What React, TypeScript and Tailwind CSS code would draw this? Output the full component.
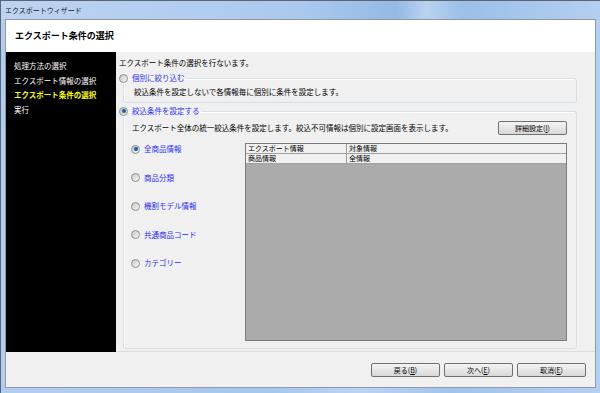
import React from "react";

const FONT = { fontFamily: '"Noto Sans CJK JP", "Noto Sans", sans-serif' };

function Radio({ checked }: { checked?: boolean }) {
  return (
    <span className="w-[9px] h-[9px] shrink-0 rounded-full border border-[#8e8f8f] bg-[linear-gradient(135deg,#c8c8c8,#f8f8f8)] flex items-center justify-center">
      {checked && <span className="w-[4px] h-[4px] rounded-full bg-[#1d5fa8] shadow-[0_0_1px_#7fb3e6]" />}
    </span>
  );
}

function Btn({ label, k }: { label: string; k: string }) {
  return (
    <button className="w-[69px] h-[14px] rounded-[2px] border border-[#707070] bg-[linear-gradient(#f4f4f4,#e6e6e6_50%,#d8d8d8)] text-[7px] leading-[12px] text-black flex items-center justify-center">
      {label}(<span className="underline">{k}</span>)
    </button>
  );
}

const options = ["全商品情報", "商品分類", "機割モデル情報", "共通商品コード", "カテゴリー"];

export default function App() {
  return (
    <div
      style={FONT}
      className="w-[600px] h-[393px] flex flex-col overflow-hidden border-t border-l border-[#5a6676] bg-[linear-gradient(90deg,#b3cdee,#a6c6ec_45%,#bcd4f1_60%,#a2c2ea_75%,#b6d0ef)]"
    >
      <div className="h-[18px] shrink-0 flex items-center pl-[4px] text-[7px] text-[#10192a] bg-[linear-gradient(90deg,#bcd4f0,#abc9ee_50%,#95b9e4_66%,#b9d2f0_71%,#9cbfe8_77%,#b4cfef_100%)]">
        エクスポートウィザード
      </div>
      <div className="flex-1 flex flex-col ml-[4px] mr-[4px] mb-[5px] border border-[#8d9aab] bg-[#f0f0f0]">
        <div className="h-[32px] shrink-0 bg-white flex items-center pl-[9px] text-[9px] font-bold text-black">
          エクスポート条件の選択
        </div>
        <div className="flex flex-1 min-h-0">
          <div className="w-[110px] shrink-0 bg-black flex flex-col pt-[7px] pl-[8px] text-[7.5px] leading-[14.5px] text-white">
            <div>処理方法の選択</div>
            <div>エクスポート情報の選択</div>
            <div className="text-[#ffff00] font-bold">エクスポート条件の選択</div>
            <div>実行</div>
          </div>
          <div className="flex-1 flex flex-col border-b border-[#dcdcdc] text-[7.5px] leading-[12px] text-black">
            <div className="pl-[3px] pt-[5px]">エクスポート条件の選択を行ないます。</div>
            <fieldset className="ml-[7px] mr-[18px] mt-[3px] border border-[#d5dfe5] rounded-[3px] shadow-[inset_1px_1px_0_#ffffff]">
              <legend className="ml-[-5px] pr-[2px] flex items-center gap-[4px] text-[#2b2bff]">
                <Radio />
                <span>個別に絞り込む</span>
              </legend>
              <div className="pl-[10px] pt-[2px] pb-[4px]">絞込条件を設定しないで各情報毎に個別に条件を設定します。</div>
            </fieldset>
            <fieldset className="flex-1 ml-[7px] mr-[18px] mt-[2px] mb-[2px] border border-[#d5dfe5] rounded-[3px] flex flex-col shadow-[inset_1px_1px_0_#ffffff]">
              <legend className="ml-[-5px] pr-[2px] flex items-center gap-[4px] text-[#2b2bff]">
                <Radio checked />
                <span>絞込条件を設定する</span>
              </legend>
              <div className="flex items-center justify-between pl-[8px] pr-[9px] mt-[4px]">
                <span>エクスポート全体の統一絞込条件を設定します。絞込不可情報は個別に設定画面を表示します。</span>
                <button className="w-[69px] h-[14px] rounded-[2px] border border-[#707070] bg-[linear-gradient(#f4f4f4,#e6e6e6_50%,#d8d8d8)] text-[7px] leading-[12px] flex items-center justify-center">
                  詳細設定(<span className="underline">I</span>)
                </button>
              </div>
              <div className="flex flex-1 mt-[8px] pr-[9px] pb-[7px]">
                <div className="w-[121px] shrink-0 flex flex-col pl-[7px] gap-[16.5px] text-[#2b2bff]">
                  {options.map((o, i) => (
                    <div key={o} className="flex items-center gap-[4px] h-[12px]">
                      <Radio checked={i === 0} />
                      <span>{o}</span>
                    </div>
                  ))}
                </div>
                <div className="flex-1 flex flex-col border border-[#7a7a7a] bg-[#ababab] text-[7px] leading-[9px]">
                  <div className="flex bg-[#f0f0f0] border-b border-[#a0a0a0]">
                    <div className="w-[101px] border-r border-[#a0a0a0] pl-[2px] h-[9px]">エクスポート情報</div>
                    <div className="flex-1 pl-[2px]">対象情報</div>
                  </div>
                  <div className="flex bg-[#f0f0f0] border-b border-[#a0a0a0]">
                    <div className="w-[101px] border-r border-[#a0a0a0] pl-[2px] h-[9px]">商品情報</div>
                    <div className="flex-1 pl-[2px]">全情報</div>
                  </div>
                </div>
              </div>
            </fieldset>
          </div>
        </div>
        <div className="h-[35px] shrink-0 flex items-center justify-end gap-[4px] pr-[9px] pt-[1px]">
          <Btn label="戻る" k="B" />
          <Btn label="次へ" k="E" />
          <Btn label="取消" k="E" />
        </div>
      </div>
    </div>
  );
}
